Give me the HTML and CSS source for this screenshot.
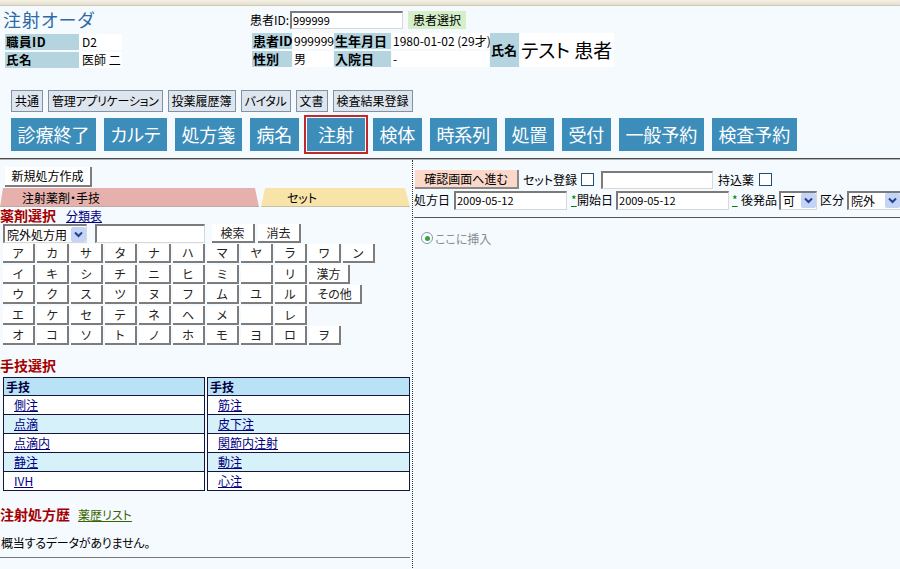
FILE: index.html
```html
<!DOCTYPE html>
<html lang="ja">
<head>
<meta charset="utf-8">
<title>注射オーダ</title>
<link rel="stylesheet" href="styles.css">
</head>
<body>
<div class="topband"></div>
<header class="head">
  <div class="staff">
    <h1 class="title">注射オーダ</h1>
    <div class="sgrid">
      <div class="lab">職員ID</div><div class="val">D2</div>
      <div class="lab">氏名</div><div class="val">医師 二</div>
    </div>
  </div>
  <div class="patient">
    <div class="psearch"><span>患者ID:</span><span class="inp pid">999999</span><span class="selbtn">患者選択</span></div>
    <div class="pgrid">
      <div class="lab">患者ID</div><div class="val">999999</div><div class="lab">生年月日</div><div class="val">1980-01-02 (29才)</div><div class="lab name-lab">氏名</div><div class="val name-val">テスト 患者</div>
      <div class="lab">性別</div><div class="val">男</div><div class="lab">入院日</div><div class="val">-</div>
    </div>
  </div>
</header>
<nav class="subnav">
  <a class="sbtn">共通</a><a class="sbtn nar">管理アプリケーション</a><a class="sbtn">投薬履歴簿</a><a class="sbtn nar">バイタル</a><a class="sbtn">文書</a><a class="sbtn">検査結果登録</a>
</nav>
<nav class="mainnav">
  <a class="mbtn">診療終了</a><a class="mbtn">カルテ</a><a class="mbtn">処方箋</a><a class="mbtn">病名</a><a class="mbtn active">注射</a><a class="mbtn">検体</a><a class="mbtn">時系列</a><a class="mbtn">処置</a><a class="mbtn">受付</a><a class="mbtn">一般予約</a><a class="mbtn">検査予約</a>
</nav>
<div class="rule"></div>
<main class="main">
  <section class="left">
    <div class="newbtn">新規処方作成</div>
    <div class="tabs"><div class="tab tab1">注射薬剤・手技</div><div class="tab tab2">セット</div></div>
    <div class="sec-h"><span class="red">薬剤選択</span><a class="link">分類表</a></div>
    <div class="srow">
      <span class="sel sel1"><span class="seltxt">院外処方用</span><span class="arrow"><svg width="9" height="7" viewBox="0 0 9 7"><path d="M1 1.5 L4.5 5 L8 1.5" fill="none" stroke="#24418c" stroke-width="2"/></svg></span></span>
      <span class="inp sinp"></span>
      <span class="kbtn b-search">検索</span><span class="kbtn b-clear">消去</span>
    </div>
    <div class="kana">
      <div class="krow"><span class="kbtn">ア</span><span class="kbtn">カ</span><span class="kbtn">サ</span><span class="kbtn">タ</span><span class="kbtn">ナ</span><span class="kbtn">ハ</span><span class="kbtn">マ</span><span class="kbtn">ヤ</span><span class="kbtn">ラ</span><span class="kbtn">ワ</span><span class="kbtn">ン</span></div>
      <div class="krow"><span class="kbtn">イ</span><span class="kbtn">キ</span><span class="kbtn">シ</span><span class="kbtn">チ</span><span class="kbtn">ニ</span><span class="kbtn">ヒ</span><span class="kbtn">ミ</span><span class="kbtn blank"></span><span class="kbtn">リ</span><span class="kbtn w2">漢方</span></div>
      <div class="krow"><span class="kbtn">ウ</span><span class="kbtn">ク</span><span class="kbtn">ス</span><span class="kbtn">ツ</span><span class="kbtn">ヌ</span><span class="kbtn">フ</span><span class="kbtn">ム</span><span class="kbtn">ユ</span><span class="kbtn">ル</span><span class="kbtn w3">その他</span></div>
      <div class="krow"><span class="kbtn">エ</span><span class="kbtn">ケ</span><span class="kbtn">セ</span><span class="kbtn">テ</span><span class="kbtn">ネ</span><span class="kbtn">ヘ</span><span class="kbtn">メ</span><span class="kbtn blank"></span><span class="kbtn">レ</span></div>
      <div class="krow"><span class="kbtn">オ</span><span class="kbtn">コ</span><span class="kbtn">ソ</span><span class="kbtn">ト</span><span class="kbtn">ノ</span><span class="kbtn">ホ</span><span class="kbtn">モ</span><span class="kbtn">ヨ</span><span class="kbtn">ロ</span><span class="kbtn">ヲ</span></div>
    </div>
    <div class="sec-h sec-h2"><span class="red">手技選択</span></div>
    <div class="ttables">
      <table class="tt t1">
        <tr class="hd"><th>手技</th></tr>
        <tr><td><a class="tlink">側注</a></td></tr>
        <tr class="alt"><td><a class="tlink">点滴</a></td></tr>
        <tr><td><a class="tlink">点滴内</a></td></tr>
        <tr class="alt"><td><a class="tlink">静注</a></td></tr>
        <tr><td><a class="tlink">IVH</a></td></tr>
      </table>
      <table class="tt t2">
        <tr class="hd"><th>手技</th></tr>
        <tr><td><a class="tlink">筋注</a></td></tr>
        <tr class="alt"><td><a class="tlink">皮下注</a></td></tr>
        <tr><td><a class="tlink">関節内注射</a></td></tr>
        <tr class="alt"><td><a class="tlink">動注</a></td></tr>
        <tr><td><a class="tlink">心注</a></td></tr>
      </table>
    </div>
    <div class="sec-h hist"><span class="red">注射処方歴</span><a class="link glink">薬歴リスト</a></div>
    <div class="nodata">概当するデータがありません。</div>
    <div class="lhr"></div>
  </section>
  <section class="right">
    <div class="rrow1">
      <span class="confirm">確認画面へ進む</span>
      <span class="rlabel l-set">セット登録</span><span class="chk c1"></span>
      <span class="inp rinp"></span>
      <span class="rlabel l-mochi">持込薬</span><span class="chk c2"></span>
    </div>
    <div class="rrow2">
      <span class="rlabel">処方日</span><span class="inp dinp d1">2009-05-12</span>
      <span class="ast a1">*</span><span class="rlabel">開始日</span><span class="inp dinp d2">2009-05-12</span>
      <span class="ast a2">*</span><span class="rlabel l-kou">後発品</span>
      <span class="sel sel2"><span class="seltxt">可</span><span class="arrow"><svg width="9" height="7" viewBox="0 0 9 7"><path d="M1 1.5 L4.5 5 L8 1.5" fill="none" stroke="#24418c" stroke-width="2"/></svg></span></span>
      <span class="rlabel l-kbn">区分</span>
      <span class="sel sel3"><span class="seltxt">院外</span><span class="arrow"><svg width="9" height="7" viewBox="0 0 9 7"><path d="M1 1.5 L4.5 5 L8 1.5" fill="none" stroke="#24418c" stroke-width="2"/></svg></span></span>
    </div>
    <div class="rline"></div>
    <div class="radio-row"><span class="radio"><span class="dot"></span></span><span>ここに挿入</span></div>
  </section>
</main>
</body>
</html>
```

FILE: styles.css
```css
html, body { margin: 0; padding: 0; }
body {
  background: #f5faff;
  font-family: "Noto Sans CJK JP", "Noto Sans", sans-serif;
  font-size: 12px;
  color: #000;
  font-feature-settings: "palt";
  overflow: hidden;
  height: 569px;
}
a { cursor: pointer; }

.topband {
  height: 5px;
  background: linear-gradient(#f4f1e7, #e4dfcd);
  border-bottom: 1px solid #cfc8b3;
}

.head { display: flex; padding: 4px 0 0 3px; }
.staff { width: 247px; }
.title {
  margin: 0;
  font-size: 18px;
  font-weight: normal;
  line-height: 19px;
  color: #2f69a6;
  letter-spacing: 1px;
}
.sgrid {
  display: grid;
  grid-template-columns: 74px 43px;
  grid-auto-rows: 16px;
  row-gap: 2px;
  margin: 5px 0 0 2px;
}
.sgrid .lab { font-size: 12.5px; letter-spacing: 0.5px; }
.lab {
  background: #b4d4df;
  font-weight: bold;
  font-size: 13px;
  line-height: 16px;
  padding-left: 1px;
  white-space: nowrap;
}
.val {
  background: #fff;
  line-height: 16px;
  padding-left: 3px;
  white-space: nowrap;
}

.psearch { display: flex; align-items: center; height: 19px; }
.inp {
  box-sizing: border-box;
  background: #fff;
  border-top: 2px solid #7b7b7b;
  border-left: 2px solid #7b7b7b;
  border-right: 1px solid #d8d8d8;
  border-bottom: 1px solid #d8d8d8;
  font-size: 11px;
  line-height: 15px;
  padding-left: 1px;
  display: inline-block;
}
.pid { width: 113px; height: 18px; margin-left: 1px; }
.selbtn {
  margin-left: 5px;
  width: 58px;
  height: 18px;
  background: #d5efc8;
  text-align: center;
  line-height: 18px;
}
.pgrid {
  display: grid;
  grid-template-columns: 40px 40px 57px 97px 29px 94px;
  grid-auto-rows: 16px;
  gap: 2px 1px;
  margin: 4px 0 0 2px;
}
.pgrid .val { padding-left: 1px; }
.name-lab { grid-row: span 2; display: flex; align-items: center; }
.name-val { grid-row: span 2; font-size: 19px; display: flex; align-items: center; padding-left: 3px; }

.subnav { display: flex; gap: 5px; margin: 22px 0 0 11px; }
.sbtn {
  height: 22px;
  box-sizing: border-box;
  border: 1px solid #8391a2;
  background: #dde6ef;
  padding: 0 3px;
  line-height: 20px;
  white-space: nowrap;
}
.nar { letter-spacing: -0.3px; }

.mainnav { display: flex; gap: 8px; margin: 6px 0 0 11px; }
.mbtn {
  height: 33px;
  padding: 0 6.5px;
  background: #3d8dbb;
  color: #fff;
  font-size: 18px;
  line-height: 33px;
  white-space: nowrap;
}
.mbtn.active {
  padding: 0 11px;
  outline: 2px solid #c1292b;
  outline-offset: 1px;
}

.rule {
  margin-top: 7px;
  border-top: 1px solid #4a4a4a;
  border-bottom: 1px solid #b4b4b4;
}

.main { display: flex; height: 410px; }
.left { width: 412px; border-right: 1px dotted #333; }
.right { flex: 1; padding-left: 1px; }

.newbtn {
  margin: 7px 0 0 5px;
  width: 87px;
  height: 20px;
  box-sizing: border-box;
  background: #fff;
  border-right: 2px solid #7d7d7d;
  border-bottom: 2px solid #7d7d7d;
  text-align: center;
  line-height: 18px;
}
.tabs { display: flex; height: 19px; margin-top: 1px; }
.tab { height: 19px; line-height: 19px; box-sizing: border-box; }
.tab1 {
  width: 260px;
  background: linear-gradient(#e6b1ad 0, #e6b1ad 18px, #b9a9a9 18px);
  clip-path: polygon(3px 0, 255px 0, 259px 100%, 0 100%);
  padding-left: 22px;
}
.tab2 {
  width: 152px;
  background: linear-gradient(#f8e4a9 0, #f8e4a9 18px, #c9c0a8 18px);
  clip-path: polygon(5px 0, 145px 0, 150px 100%, 1px 100%);
  padding-left: 27px;
}

.sec-h { height: 16px; line-height: 16px; white-space: nowrap; }
.red { color: #a50000; font-weight: bold; font-size: 14px; }
.link { color: #00007f; text-decoration: underline; margin-left: 10px; font-size: 12px; }
.glink { color: #3a6400; margin-left: 8px; }

.srow { display: flex; height: 19px; margin: 1px 0 0 3px; }
.sel {
  box-sizing: border-box;
  display: flex;
  align-items: center;
  justify-content: space-between;
  background: #fff;
  border-top: 2px solid #7b7b7b;
  border-left: 2px solid #7b7b7b;
  border-right: 1px solid #d8d8d8;
  border-bottom: 1px solid #d8d8d8;
  height: 19px;
  padding-left: 2px;
}
.seltxt { font-size: 12px; line-height: 15px; white-space: nowrap; }
.arrow {
  width: 15px;
  height: 15px;
  background: #c3d4f6;
  border-radius: 2px;
  display: flex;
  align-items: center;
  justify-content: center;
  flex-shrink: 0;
}
.sel1 { width: 84px; }
.sinp { width: 110px; height: 19px; margin-left: 8px; }
.b-search { margin-left: 7px; }
.srow .kbtn { width: 43px; height: 19px; }
.b-clear { margin-left: 3px; }

.kana { margin: 1px 0 0 3px; }
.krow { display: flex; gap: 2px; height: 19px; margin-bottom: 1.5px; }
.kbtn {
  width: 32px;
  height: 19px;
  box-sizing: border-box;
  background: #fff;
  border-right: 2px solid #7d7d7d;
  border-bottom: 2px solid #7d7d7d;
  text-align: center;
  line-height: 17px;
  color: #222;
  white-space: nowrap;
  display: inline-block;
}
.kbtn.w2 { width: 41px; }
.kbtn.w3 { width: 53px; }

.sec-h2 { margin-top: 12px; height: 17px; line-height: 17px; }
.ttables { display: flex; gap: 2px; margin: 3px 0 0 3px; }
.tt { border-collapse: collapse; }
.t1 { width: 202px; }
.t2 { width: 203px; }
.tt tr { height: 19px; }
.tt tr.hd { height: 18px; }
.tt th {
  padding: 0 0 0 2px;
  text-align: left;
  font-weight: bold;
  background: #bae2f6;
  color: #000040;
  border: 1px solid #16163a;
  line-height: 16px;
}
.tt td {
  padding: 0 0 0 10px;
  border: 1px solid #16163a;
  background: #fff;
  line-height: 16px;
}
.tt tr.alt td { background: #d7f1fb; }
.tlink { color: #00007f; text-decoration: underline; }

.hist { margin-top: 15px; }
.nodata { margin-top: 13px; line-height: 16px; letter-spacing: -0.2px; padding-left: 1px; }
.lhr { margin-top: 6px; width: 410px; border-top: 1px solid #777; }

.rrow1 { display: flex; align-items: center; height: 19px; margin-top: 10px; }
.confirm {
  width: 104px;
  height: 19px;
  box-sizing: border-box;
  background: #fbd8ca;
  border-right: 2px solid #8a8a8a;
  border-bottom: 2px solid #8a8a8a;
  text-align: center;
  line-height: 17px;
  margin-left: 1px;
  white-space: nowrap;
}
.rlabel { white-space: nowrap; line-height: 16px; }
.l-set { margin-left: 4px; }
.chk {
  width: 13px;
  height: 13px;
  box-sizing: border-box;
  background: #fff;
  border: 1px solid #1c4f7e;
  display: inline-block;
}
.c1 { margin-left: 4px; }
.rinp { width: 112px; height: 18px; margin-left: 7px; }
.l-mochi { margin-left: 5px; }
.c2 { margin-left: 5px; }

.rrow2 { display: flex; align-items: center; height: 20px; margin-top: 1px; }
.dinp { width: 113px; height: 19px; }
.d1 { margin-left: 4px; }
.d2 { margin-left: 3px; }
.ast { color: #008000; text-decoration: underline; margin-left: 4px; width: 6px; line-height: 16px; }
.a2 { margin-left: 3px; margin-right: 3px; }
.l-kou { margin-right: 2px; }
.sel2 { width: 38px; }
.l-kbn { margin-left: 3px; }
.sel3 { width: 54px; margin-left: 3px; flex-shrink: 0; }

.rline { margin-top: 7px; border-top: 1px solid #555; }
.radio-row { margin: 12px 0 0 7px; display: flex; align-items: center; gap: 2px; color: #8a8a8a; height: 16px; }
.radio {
  width: 12px;
  height: 12px;
  box-sizing: border-box;
  border: 1px solid #7e97ab;
  border-radius: 50%;
  background: #fff;
  display: flex;
  align-items: center;
  justify-content: center;
}
.dot { width: 5px; height: 5px; border-radius: 50%; background: #37a33a; }
```
